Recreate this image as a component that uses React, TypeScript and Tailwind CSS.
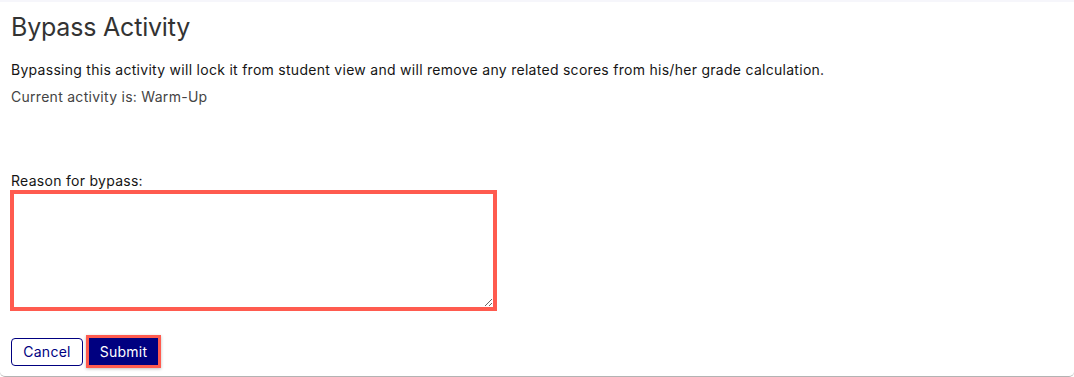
import { useState } from "react";

const App = () => {
  const [reason, setReason] = useState("");

  return (
    <div
      className="h-[377px] w-full bg-white border-t-2 border-t-[#f6f6fb] border-b border-b-[#b3b3b3] rounded-b-[5px] pl-[11px] pr-4 overflow-hidden tracking-[0.28px]"
      style={{ fontFamily: "Inter, 'Noto Sans', Arial, sans-serif" }}
    >
      <h1 className="pt-[10px] text-[25px] leading-[30px] font-normal tracking-[-0.2px] text-[#333333]">
        Bypass Activity
      </h1>

      <p className="mt-[18px] text-[14px] leading-[20px] text-[#151515]">
        Bypassing this activity will lock it from student view and will remove any related scores from his/her grade
        calculation.
      </p>
      <p className="mt-[7px] text-[14px] leading-[20px] text-[#444444]">Current activity is: Warm-Up</p>

      <label htmlFor="reason" className="block mt-[64px] text-[14px] leading-[19px] text-[#151515]">
        Reason for bypass:
      </label>
      <textarea
        id="reason"
        value={reason}
        onChange={(e) => setReason(e.target.value)}
        className="block -ml-px w-[487px] h-[121px] border-4 border-[#ff5b4f] bg-white outline-none resize p-1 text-[14px]"
      />

      <div className="mt-[24px] flex items-center gap-[3px]">
        <button className="h-[28px] w-[72px] rounded-[4px] border border-[#000080] bg-white text-[14px] text-[#000080]">
          Cancel
        </button>
        <div className="border-[3px] border-[#ff5b4f] shadow-[0_1px_3px_rgba(0,0,0,0.25)]">
          <button className="block h-[27px] w-[69px] bg-[#000080] text-[14px] text-white">Submit</button>
        </div>
      </div>
    </div>
  );
};

export default App;
